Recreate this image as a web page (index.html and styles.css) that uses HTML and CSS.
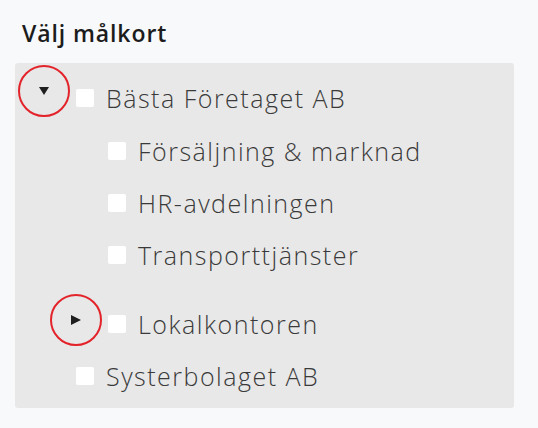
FILE: index.html
```html
<!DOCTYPE html>
<html lang="sv">
<head>
  <meta charset="UTF-8">
  <meta name="viewport" content="width=device-width, initial-scale=1.0">
  <title>Välj målkort</title>
  <link rel="stylesheet" href="styles.css">
</head>
<body>
  <div class="picker">
    <h2 class="title">Välj målkort</h2>

    <ul class="tree">
      <li>
        <div class="row">
          <span class="toggle open marked">
            <svg width="10" height="8" viewBox="0 0 10 8"><polygon points="0,0 10,0 5,8" /></svg>
          </span>
          <span class="box"></span>
          <span class="label">Bästa Företaget AB</span>
        </div>
        <ul class="children">
          <li class="row"><span class="toggle"></span><span class="box"></span><span class="label">Försäljning &amp; marknad</span></li>
          <li class="row"><span class="toggle"></span><span class="box"></span><span class="label">HR-avdelningen</span></li>
          <li class="row"><span class="toggle"></span><span class="box"></span><span class="label">Transporttjänster</span></li>
          <li class="row closed-node">
            <span class="toggle closed marked">
              <svg width="10" height="10" viewBox="0 0 10 10"><polygon points="0,0 10,5 0,10" /></svg>
            </span>
            <span class="box"></span>
            <span class="label">Lokalkontoren</span>
          </li>
        </ul>
      </li>
      <li class="row"><span class="toggle"></span><span class="box"></span><span class="label">Systerbolaget AB</span></li>
    </ul>
  </div>
</body>
</html>
```

FILE: styles.css
```css
body {
  margin: 0;
  background: #f8f9fa;
  font-family: 'Open Sans', 'Liberation Sans', sans-serif;
}

.picker {
  padding: 18px 24px 0 15px;
}

.title {
  margin: 0 0 15px 7px;
  font-size: 23px;
  line-height: 30px;
  font-weight: 600;
  letter-spacing: 0.9px;
  color: #1c1c1c;
}

.tree,
.children {
  list-style: none;
  margin: 0;
  padding: 0;
}

.tree {
  background: #e8e8e8;
  border-radius: 3px;
  padding: 9px 0 6px 13px;
}

.children {
  padding-left: 32px;
}

.row {
  display: flex;
  align-items: center;
  height: 52.4px;
}

.closed-node {
  margin-top: 16px;
}

.toggle {
  position: relative;
  width: 32px;
  margin-right: 16px;
  display: flex;
  justify-content: center;
}

.toggle svg {
  display: block;
  fill: #1f1f1f;
}

.toggle.open {
  margin-bottom: 14px;
}

.toggle.closed {
  margin-bottom: 7px;
}

/* red annotation rings */
.marked::after {
  content: '';
  position: absolute;
  left: 50%;
  top: 50%;
  width: 48px;
  height: 48px;
  margin: -26px 0 0 -26px;
  border: 2px solid #e3242b;
  border-radius: 50%;
}

.box {
  width: 18px;
  height: 18px;
  background: #fff;
  border-radius: 2px;
  margin-right: 12px;
  flex-shrink: 0;
}

.label {
  font-size: 25px;
  font-weight: 300;
  letter-spacing: 1.5px;
  color: #3a3a3a;
  white-space: nowrap;
}
```
